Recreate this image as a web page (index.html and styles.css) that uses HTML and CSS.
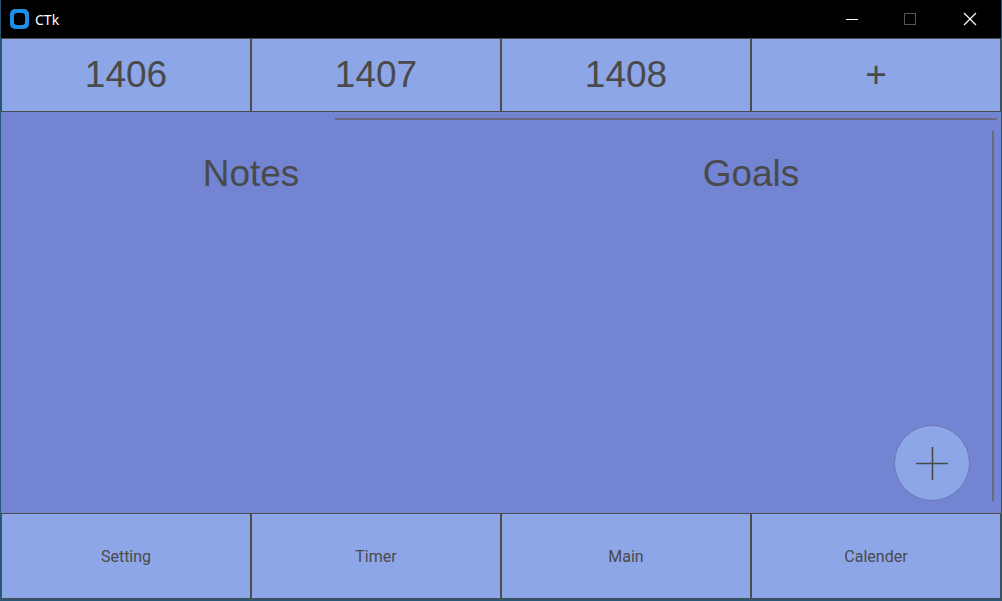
FILE: index.html
```html
<!DOCTYPE html>
<html>
<head>
<meta charset="utf-8">
<link rel="stylesheet" href="styles.css">
</head>
<body>
<div class="window">
  <div class="titlebar">
    <div class="title-left">
      <svg class="app-icon" width="19" height="20" viewBox="0 0 19 20">
        <rect x="0" y="0" width="19" height="20" rx="5" fill="#1e90e8"/>
        <rect x="4" y="4" width="11" height="12" rx="3" fill="#000"/>
      </svg>
      <span class="title-text">CTk</span>
    </div>
    <div class="controls">
      <div class="ctl"><svg width="12" height="12" viewBox="0 0 12 12"><line x1="0" y1="6.5" x2="12" y2="6.5" stroke="#fff" stroke-width="1"/></svg></div>
      <div class="ctl"><svg width="12" height="12" viewBox="0 0 12 12"><rect x="0.5" y="0.5" width="11" height="11" fill="none" stroke="#555" stroke-width="1"/></svg></div>
      <div class="ctl"><svg width="14" height="14" viewBox="0 0 14 14"><path d="M1 1 L13 13 M13 1 L1 13" stroke="#fff" stroke-width="1.2"/></svg></div>
    </div>
  </div>
  <div class="content">
    <div class="toprow">
      <div class="tab">1406</div>
      <div class="tab">1407</div>
      <div class="tab">1408</div>
      <div class="tab">+</div>
    </div>
    <div class="main">
      <div class="hline"></div>
      <div class="columns">
        <div class="col">Notes</div>
        <div class="col">Goals</div>
      </div>
      <div class="vline"></div>
      <div class="fab">
        <svg width="33" height="33" viewBox="0 0 33 33"><path d="M0 16.5 H32 M16.5 0 V33" stroke="#4a4a4a" stroke-width="1.6"/></svg>
      </div>
    </div>
    <div class="bottomrow">
      <div class="nav">Setting</div>
      <div class="nav">Timer</div>
      <div class="nav">Main</div>
      <div class="nav">Calender</div>
    </div>
  </div>
</div>
</body>
</html>
```

FILE: styles.css
```css
* { box-sizing: border-box; }
html, body { margin: 0; padding: 0; }
body { width: 1002px; height: 601px; overflow: hidden; background: #000; }

.window {
  width: 1002px;
  height: 601px;
  display: flex;
  flex-direction: column;
  border: 1px solid #2a5874;
  border-bottom-width: 2px;
  border-top: none;
  background: #7284d2;
}

.titlebar {
  height: 38px;
  flex: none;
  background: #000;
  display: flex;
  align-items: center;
  justify-content: space-between;
}
.title-left {
  display: flex;
  align-items: center;
  padding-left: 9px;
  gap: 6px;
}
.app-icon { display: block; }
.title-text {
  color: #fff;
  font-family: "Noto Sans", "Open Sans", sans-serif;
  font-size: 14px;
}
.controls { display: flex; height: 100%; }
.ctl {
  width: 58px;
  height: 100%;
  display: flex;
  align-items: center;
  justify-content: center;
}
.ctl:last-child { width: 62px; }

.content {
  flex: 1;
  display: flex;
  flex-direction: column;
}

.toprow {
  height: 74px;
  flex: none;
  display: grid;
  grid-template-columns: repeat(4, 1fr);
}
.tab {
  background: #8ca6e8;
  border: 1px solid #4d4d4d;
  display: flex;
  align-items: center;
  justify-content: center;
  font-family: "Liberation Sans", Arial, sans-serif;
  font-size: 37px;
  color: #4a4a4a;
}

.main {
  flex: 1;
  position: relative;
  background: #7284d2;
}
.hline {
  position: absolute;
  left: 334px;
  right: 4px;
  top: 6px;
  height: 2px;
  background: #676a80;
}
.vline {
  position: absolute;
  right: 7px;
  top: 19px;
  bottom: 12px;
  width: 2px;
  background: #676a80;
}
.columns {
  display: grid;
  grid-template-columns: 500px 500px;
  padding-top: 41px;
}
.col {
  text-align: center;
  font-family: "Liberation Sans", Arial, sans-serif;
  font-size: 37px;
  color: #4a4a4a;
}
.fab {
  position: absolute;
  left: 893px;
  top: 313px;
  width: 76px;
  height: 76px;
  border-radius: 50%;
  background: #8ca6e8;
  border: 1px solid #6a78b4;
  display: flex;
  align-items: center;
  justify-content: center;
}
.fab svg { display: block; }

.bottomrow {
  height: 86px;
  flex: none;
  display: grid;
  grid-template-columns: repeat(4, 1fr);
}
.nav {
  background: #8ca6e8;
  border: 1px solid #4d4d4d;
  display: flex;
  align-items: center;
  justify-content: center;
  padding-top: 1px;
  font-family: Roboto, "Liberation Sans", sans-serif;
  font-size: 16px;
  color: #4a4a4a;
}
```
